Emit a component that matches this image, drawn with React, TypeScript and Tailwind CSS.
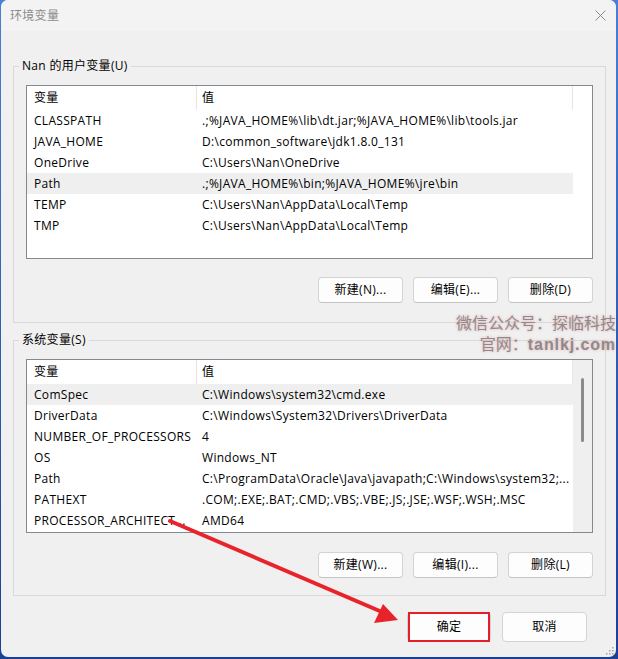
import React from 'react';

type Row = { name: string; value: string; selected?: boolean };

const userVars: Row[] = [
  { name: 'CLASSPATH', value: String.raw`.;%JAVA_HOME%\lib\dt.jar;%JAVA_HOME%\lib\tools.jar` },
  { name: 'JAVA_HOME', value: String.raw`D:\common_software\jdk1.8.0_131` },
  { name: 'OneDrive', value: String.raw`C:\Users\Nan\OneDrive` },
  { name: 'Path', value: String.raw`.;%JAVA_HOME%\bin;%JAVA_HOME%\jre\bin`, selected: true },
  { name: 'TEMP', value: String.raw`C:\Users\Nan\AppData\Local\Temp` },
  { name: 'TMP', value: String.raw`C:\Users\Nan\AppData\Local\Temp` },
];

const systemVars: Row[] = [
  { name: 'ComSpec', value: String.raw`C:\Windows\system32\cmd.exe`, selected: true },
  { name: 'DriverData', value: String.raw`C:\Windows\System32\Drivers\DriverData` },
  { name: 'NUMBER_OF_PROCESSORS', value: '4' },
  { name: 'OS', value: 'Windows_NT' },
  { name: 'Path', value: String.raw`C:\ProgramData\Oracle\Java\javapath;C:\Windows\system32;...` },
  { name: 'PATHEXT', value: '.COM;.EXE;.BAT;.CMD;.VBS;.VBE;.JS;.JSE;.WSF;.WSH;.MSC' },
  { name: 'PROCESSOR_ARCHITECT...', value: 'AMD64' },
];

const VarList: React.FC<{ rows: Row[]; scroll?: boolean }> = ({ rows, scroll }) => (
  <div className="flex h-[174px] border border-[#848891] bg-white">
    <div className="w-[546px] shrink-0">
      <div className="flex h-6">
        <div className="flex w-[170px] items-center border-r border-[#e5e5e5] pl-[7px]">变量</div>
        <div className="flex flex-1 items-center border-r border-[#e5e5e5] pl-[5px]">值</div>
      </div>
      {rows.map((r) => (
        <div
          key={r.name}
          className={`flex h-[21px] items-center whitespace-nowrap ${r.selected ? 'bg-[#efefef]' : ''}`}
        >
          <div className="w-[170px] shrink-0 overflow-hidden pl-[7px]">{r.name}</div>
          <div className="overflow-hidden pl-[5px]">{r.value}</div>
        </div>
      ))}
    </div>
    {scroll ? (
      <div className="flex flex-1 justify-center bg-[#efefef] pt-[18px]">
        <div className="h-[64px] w-[3px] rounded-full bg-[#8b8b8b]" />
      </div>
    ) : (
      <div className="flex-1" />
    )}
  </div>
);

const Btn: React.FC<{ label: string }> = ({ label }) => (
  <button className="h-[26px] w-[85px] rounded-[4px] border border-[#d3d3d3] border-b-[#c4c4c4] bg-[#fdfdfd]">
    {label}
  </button>
);

const Group: React.FC<{
  title: string;
  rows: Row[];
  buttons: string[];
  scroll?: boolean;
  className: string;
}> = ({ title, rows, buttons, scroll, className }) => (
  <fieldset className={`border border-[#d9d9d9] p-0 ${className}`}>
    <legend className="ml-[5px] px-[3px] leading-[16px]">{title}</legend>
    <div className="px-[12px] pt-[11px]">
      <VarList rows={rows} scroll={scroll} />
      <div className={`flex justify-end gap-[10px] ${scroll ? 'pt-[19px] pb-[17px]' : 'pt-[18px] pb-[19px]'}`}>
        {buttons.map((b) => (
          <Btn key={b} label={b} />
        ))}
      </div>
    </div>
  </fieldset>
);

export default function App() {
  return (
    <div className="relative h-[659px] w-[618px] overflow-hidden bg-gradient-to-b from-[#4a7fd6] to-[#1b3f96] font-['Open_Sans','Noto_Sans_CJK_SC',sans-serif] text-[12px] tracking-[0.3px] text-black">
      <div className="ml-[1px] flex h-[657px] w-[615px] flex-col overflow-hidden rounded-[7px] bg-[#f0f0f0]">
        {/* title bar */}
        <div className="flex h-[31px] shrink-0 items-center justify-between bg-[#f3f3f3] pl-[9px] pr-[9px]">
          <span className="text-[#8b8b8b]">环境变量</span>
          <svg width="11" height="11" viewBox="0 0 11 11" className="mr-[1px]">
            <path d="M0.5 0.5 L10.5 10.5 M10.5 0.5 L0.5 10.5" stroke="#8b8b8b" strokeWidth="1" />
          </svg>
        </div>

        <div className="flex flex-col pl-[12px] pr-[10px]">
          <Group
            title="Nan 的用户变量(U)"
            rows={userVars}
            buttons={['新建(N)...', '编辑(E)...', '删除(D)']}
            className="mt-[27px]"
          />
          <Group
            title="系统变量(S)"
            rows={systemVars}
            buttons={['新建(W)...', '编辑(I)...', '删除(L)']}
            scroll
            className="mt-[9px]"
          />

          <div className="mt-[16px] flex justify-end gap-[11px] pr-[19px]">
            <button className="relative h-[30px] w-[84px] rounded-[4px] border border-[#d3d3d3] bg-[#fdfdfd]">
              确定
              <span className="absolute left-[0px] top-[-1px] h-[30px] w-[82px] border-2 border-[#e3202a]" />
            </button>
            <button className="h-[30px] w-[85px] rounded-[4px] border border-[#d3d3d3] bg-[#fdfdfd]">取消</button>
          </div>
        </div>
      </div>

      {/* size grip */}
      <svg width="9" height="9" viewBox="0 0 9 9" className="absolute bottom-[4px] right-[4px]">
        <rect x="7" y="1" width="1.5" height="1.5" fill="#a6a6a6" />
        <rect x="4" y="4" width="1.5" height="1.5" fill="#a6a6a6" />
        <rect x="7" y="4" width="1.5" height="1.5" fill="#a6a6a6" />
        <rect x="1" y="7" width="1.5" height="1.5" fill="#a6a6a6" />
        <rect x="4" y="7" width="1.5" height="1.5" fill="#a6a6a6" />
        <rect x="7" y="7" width="1.5" height="1.5" fill="#a6a6a6" />
      </svg>

      {/* watermark */}
      <div className="pointer-events-none absolute right-[2px] top-[312px] text-right font-['Noto_Sans_CJK_SC',sans-serif] text-[16px] leading-[21px] tracking-normal text-[#8c8c8c] [text-shadow:0_0_3px_rgba(230,80,90,0.45)]">
        <div>微信公众号：探临科技</div>
        <div>
          官网：<span className="font-['Liberation_Sans',sans-serif] font-bold tracking-[0.9px]">tanlkj.com</span>
        </div>
      </div>

      {/* annotation arrow */}
      <svg width="618" height="659" className="pointer-events-none absolute left-0 top-0">
        <line x1="170" y1="521" x2="382" y2="612" stroke="#e8232b" strokeWidth="4" strokeLinecap="round" />
        <polygon points="383,604 398,620 374,623" fill="#e8232b" />
      </svg>
    </div>
  );
}
